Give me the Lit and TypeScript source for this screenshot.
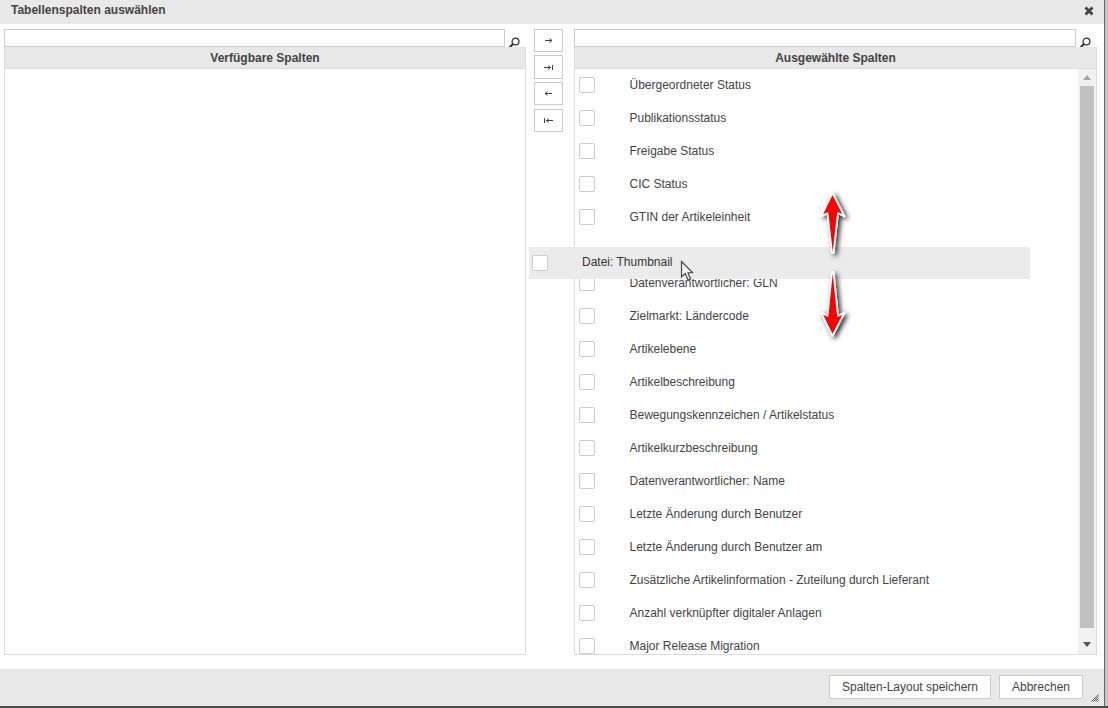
import { LitElement, html, css, svg } from "lit";
import { customElement } from "lit/decorators.js";

const search = html`<svg class="mag" width="14" height="14" viewBox="0 0 14 14"><circle cx="8.5" cy="5.5" r="3.4" fill="none" stroke="#333" stroke-width="1.3"/><path d="M6 8 L2.2 11.8" stroke="#333" stroke-width="2" fill="none"/></svg>`;

const arrowIcon = (d: string) => html`<svg width="11" height="9" viewBox="0 0 11 9"><path d="${d}" fill="none" stroke="#444" stroke-width="1"/></svg>`;

const rowsTop = [
  "Übergeordneter Status",
  "Publikationsstatus",
  "Freigabe Status",
  "CIC Status",
  "GTIN der Artikeleinheit",
];
const rowsBottom = [
  "Datenverantwortlicher: GLN",
  "Zielmarkt: Ländercode",
  "Artikelebene",
  "Artikelbeschreibung",
  "Bewegungskennzeichen / Artikelstatus",
  "Artikelkurzbeschreibung",
  "Datenverantwortlicher: Name",
  "Letzte Änderung durch Benutzer",
  "Letzte Änderung durch Benutzer am",
  "Zusätzliche Artikelinformation - Zuteilung durch Lieferant",
  "Anzahl verknüpfter digitaler Anlagen",
  "Major Release Migration",
];

@customElement("app-root")
export class AppRoot extends LitElement {
  static styles = css`
    :host {
      display: block;
      position: relative;
      width: 1108px;
      height: 708px;
      overflow: hidden;
      background: #c4c4c4;
      font-family: "Liberation Sans", Arial, sans-serif;
      font-size: 12px;
      color: #444;
    }
    .dialog {
      width: 1105px;
      height: 706px;
      box-sizing: border-box;
      display: flex;
      flex-direction: column;
      background: #fff;
      border-right: 1px solid #666;
    }
    .bottomline { height: 2px; background: #4a4a4a; }
    .title {
      height: 24px;
      flex: none;
      background: #e8e8e8;
      display: flex;
      align-items: center;
      justify-content: space-between;
      padding: 0 10px 4px 11px;
      box-sizing: border-box;
      font-weight: bold;
      color: #444;
    }
    .close { display: block; margin-top: 1px; }
    .body {
      flex: 1;
      min-height: 0;
      display: flex;
      padding: 5px 7px 14px 4px;
    }
    .col { display: flex; flex-direction: column; min-width: 0; }
    .left { width: 522px; flex: none; }
    .right { width: 523px; flex: none; }
    .searchline { display: flex; height: 18px; flex: none; }
    .input {
      box-sizing: border-box;
      height: 18px;
      border: 1px solid #ccc;
      background: #fff;
    }
    .left .input { width: 501px; }
    .right .input { width: 502px; }
    .mag { margin: 7px 0 0 1.5px; flex: none; }
    .panel {
      flex: 1;
      min-height: 0;
      display: flex;
      flex-direction: column;
      box-sizing: border-box;
      border: 1px solid #ddd;
      border-top: none;
    }
    .head {
      flex: none;
      height: 22px;
      background: #e8e8e8;
      border-bottom: 1px solid #ddd;
      box-sizing: border-box;
      display: flex;
      align-items: center;
      justify-content: center;
      font-weight: bold;
      color: #444;
    }
    .mid {
      width: 29px;
      flex: none;
      margin: 0 11px 0 8px;
      display: flex;
      flex-direction: column;
      gap: 3px;
    }
    .mv {
      box-sizing: border-box;
      width: 29px;
      height: 23px;
      border: 1px solid #ccc;
      background: #fff;
      display: flex;
      align-items: center;
      justify-content: center;
    }
    .mv:nth-child(2) { height: 24px; }
    .mv:nth-child(4) { margin-top: 1px; }
    .listwrap { flex: 1; min-height: 0; display: flex; }
    .list { flex: 1; min-width: 0; overflow: hidden; }
    .rows { margin-top: -1px; }
    .row {
      height: 33px;
      display: flex;
      align-items: center;
      padding-left: 4px;
      box-sizing: border-box;
    }
    .box {
      box-sizing: border-box;
      width: 16px;
      height: 16px;
      border: 1px solid #ccc;
      border-radius: 2px;
      background: #fff;
      flex: none;
      margin-right: 34.5px;
    }
    .sb {
      width: 18px;
      flex: none;
      background: #f1f1f1;
      display: flex;
      flex-direction: column;
      align-items: center;
    }
    .sb-btn { height: 17px; flex: none; display: flex; align-items: center; justify-content: center; }
    .sb-btn.down { margin-top: auto; height: 19px; padding-bottom: 1px; box-sizing: border-box; }
    .thumb { width: 14px; height: 542px; flex: none; background: #c1c1c1; }
    .footer {
      flex: none;
      height: 37px;
      background: #e8e8e8;
      display: flex;
      align-items: flex-start;
      justify-content: flex-end;
      gap: 8px;
      padding: 6px 21px 0 0;
      box-sizing: border-box;
      position: relative;
    }
    .btn {
      box-sizing: border-box;
      height: 24px;
      border: 1px solid #ccc;
      background: #fff;
      display: flex;
      align-items: center;
      justify-content: center;
      color: #444;
    }
    .save { width: 162px; }
    .cancel { width: 84px; }
    .grip { position: absolute; right: 5px; bottom: 4px; }
    .drag {
      position: absolute;
      left: 529px;
      top: 247px;
      width: 501px;
      height: 32px;
      background: #ebebeb;
      display: flex;
      align-items: center;
      padding-left: 3px;
      box-sizing: border-box;
      color: #333;
      padding-bottom: 2px;
    }
    .drag .box { margin-right: 34px; margin-top: 2px; }
    .over { position: absolute; left: 0; top: 0; pointer-events: none; overflow: visible; }
  `;

  render() {
    return html`
      <div class="dialog">
        <div class="title">
          <span>Tabellenspalten auswählen</span>
          <svg class="close" width="10" height="10" viewBox="0 0 10 10"><path d="M1.5 1.5 L8.5 8.5 M8.5 1.5 L1.5 8.5" stroke="#444" stroke-width="2.8"/></svg>
        </div>
        <div class="body">
          <div class="col left">
            <div class="searchline"><div class="input"></div>${search}</div>
            <div class="panel">
              <div class="head">Verfügbare Spalten</div>
            </div>
          </div>
          <div class="mid">
            <div class="mv">${arrowIcon("M2 4.5 H9 M6.5 2.5 L9 4.5 L6.5 6.5")}</div>
            <div class="mv">${arrowIcon("M1 4.5 H7.5 M5 2.5 L7.5 4.5 L5 6.5 M9.5 2 V7")}</div>
            <div class="mv">${arrowIcon("M2 4.5 H9 M4.5 2.5 L2 4.5 L4.5 6.5")}</div>
            <div class="mv">${arrowIcon("M3.5 4.5 H10 M6 2.5 L3.5 4.5 L6 6.5 M1.5 2 V7")}</div>
          </div>
          <div class="col right">
            <div class="searchline"><div class="input"></div>${search}</div>
            <div class="panel">
              <div class="head">Ausgewählte Spalten</div>
              <div class="listwrap">
                <div class="list">
                  <div class="rows">
                    ${rowsTop.map((t) => html`<div class="row"><span class="box"></span><span>${t}</span></div>`)}
                    <div class="row"></div>
                    ${rowsBottom.map((t) => html`<div class="row"><span class="box"></span><span>${t}</span></div>`)}
                  </div>
                </div>
                <div class="sb">
                  <div class="sb-btn"><svg width="8" height="5" viewBox="0 0 8 5"><path d="M4 0 L8 5 H0 Z" fill="#a5a5a5"/></svg></div>
                  <div class="thumb"></div>
                  <div class="sb-btn down"><svg width="8" height="5" viewBox="0 0 8 5"><path d="M0 0 H8 L4 5 Z" fill="#555"/></svg></div>
                </div>
              </div>
            </div>
          </div>
        </div>
        <div class="footer">
          <div class="btn save">Spalten-Layout speichern</div>
          <div class="btn cancel">Abbrechen</div>
          <svg class="grip" width="8" height="8" viewBox="0 0 8 8"><path d="M7.5 .5 L.5 7.5 M7.5 2.5 L2.5 7.5 M7.5 4.5 L4.5 7.5 M7.5 6.5 L6.5 7.5" stroke="#555" stroke-width="1"/></svg>
        </div>
      </div>
      <div class="bottomline"></div>
      <div class="drag"><span class="box"></span><span>Datei: Thumbnail</span></div>
      <svg class="over" width="1108" height="708" viewBox="0 0 1108 708">
        <defs>
          <filter id="s" x="-80%" y="-20%" width="260%" height="140%">
            <feDropShadow dx="2.5" dy="2" stdDeviation="2.5" flood-color="#000" flood-opacity="0.85"/>
          </filter>
        </defs>
        ${svg`
          <path d="M832.5 193 L844.5 216.5 L838 213 L833.5 253 L832 253 L827.5 213 L821 216.5 Z" fill="#f00" stroke="#fff" stroke-width="1.8" stroke-linejoin="round" filter="url(#s)"/>
          <path d="M832.5 336 L844.5 312.5 L838 316 L833.5 272 L832 272 L827.5 316 L821 312.5 Z" fill="#f00" stroke="#fff" stroke-width="1.8" stroke-linejoin="round" filter="url(#s)"/>
          <path d="M681.5 261.5 V277 L685.2 273.6 L688 280 L690.5 279 L688 272.8 L692.5 272.5 Z" fill="#f4f4f4" stroke="#444" stroke-width="1.2"/>
        `}
      </svg>
    `;
  }
}
